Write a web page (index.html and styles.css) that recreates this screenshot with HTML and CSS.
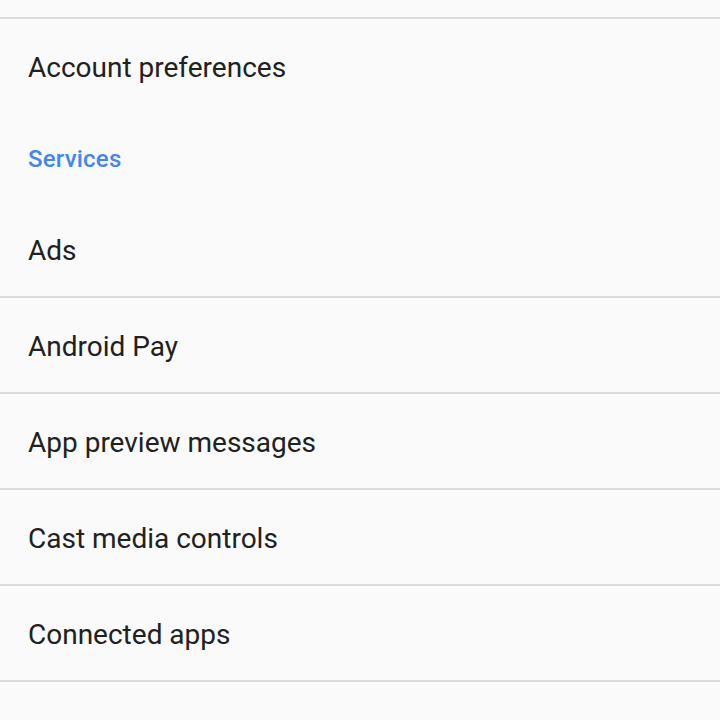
FILE: index.html
```html
<!DOCTYPE html>
<html lang="en">
<head>
    <meta charset="UTF-8">
    <meta name="viewport" content="width=device-width, initial-scale=1.0">
    <title>Settings</title>
    <link rel="stylesheet" href="styles.css">
</head>
<body>
    <div class="settings">
        <div class="row-tail divided"></div>
        <div class="pref">Account preferences</div>

        <div class="category">Services</div>

        <div class="pref divided">Ads</div>
        <div class="pref divided">Android Pay</div>
        <div class="pref divided">App preview messages</div>
        <div class="pref divided">Cast media controls</div>
        <div class="pref divided">Connected apps</div>
    </div>
</body>
</html>
```

FILE: styles.css
```css
body {
    margin: 0;
    background-color: #fafafa;
    font-family: 'Roboto', 'Noto Sans', sans-serif;
    overflow: hidden;
}

.settings {
    display: flex;
    flex-direction: column;
}

.divided {
    border-bottom: 2px solid #dcdcdc;
}

.row-tail {
    height: 17px;
}

.pref {
    height: 94px;
    display: flex;
    align-items: center;
    padding-left: 28px;
    padding-top: 2px;
    box-sizing: border-box;
    font-size: 28px;
    color: #212121;
}

.pref.divided {
    height: 96px;
}

.category {
    height: 89px;
    display: flex;
    align-items: center;
    padding-left: 28px;
    padding-top: 2px;
    box-sizing: border-box;
    font-size: 24px;
    font-weight: 500;
    letter-spacing: 0.2px;
    color: #4285f4;
}
```
